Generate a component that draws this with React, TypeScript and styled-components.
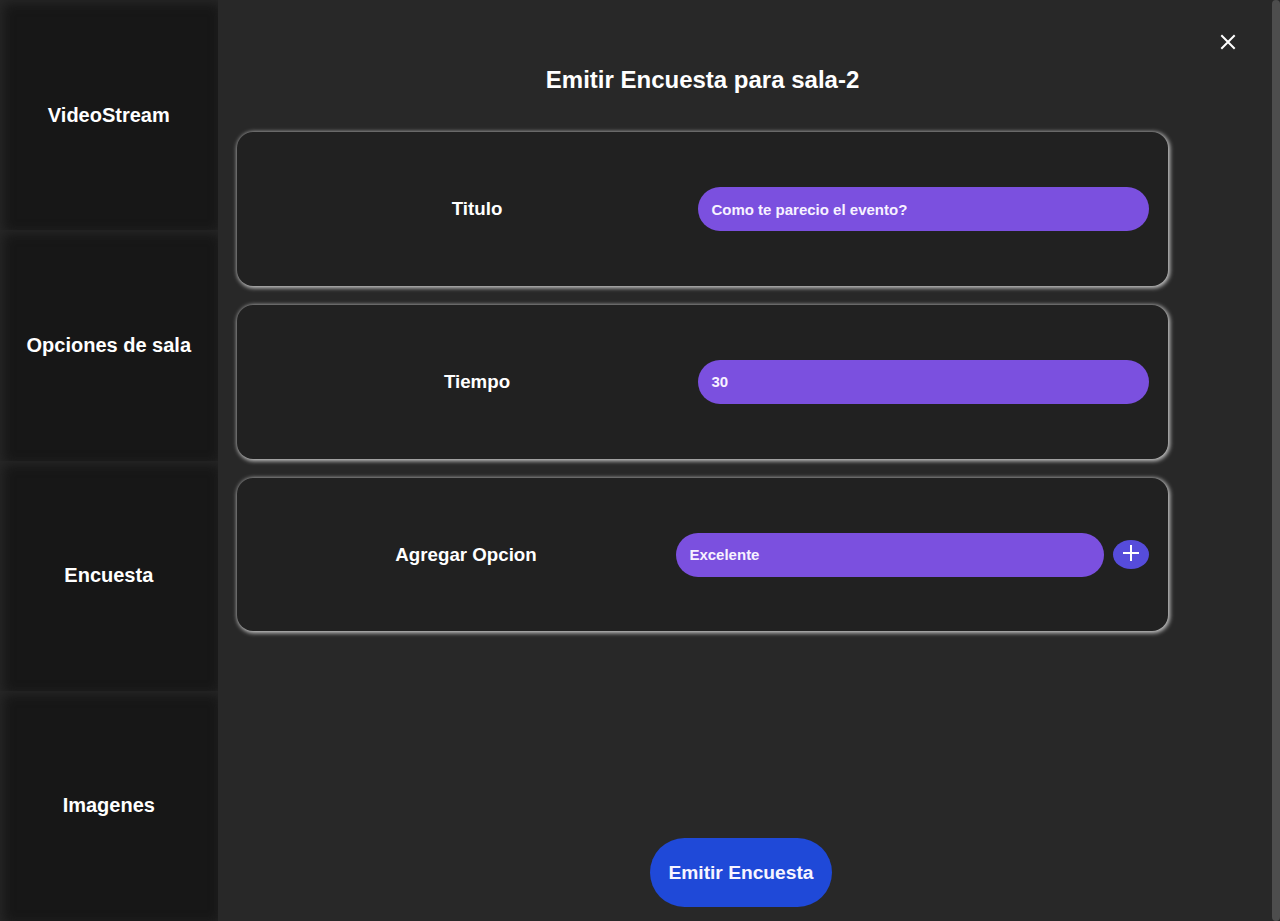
import React from "react";
import styled, { createGlobalStyle } from "styled-components";

const GlobalStyle = createGlobalStyle`
  *, *::before, *::after { box-sizing: border-box; }
  body {
    margin: 0;
    background: #282828;
    color: #fff;
    font-family: "Liberation Sans", Arial, sans-serif;
    overflow: hidden;
  }
  button, input { font: inherit; color: inherit; border: 0; outline: 0; }
`;

const Page = styled.div`
  display: grid;
  grid-template-columns: 217.6px 1fr 8px;
  height: 921px;
  background: #282828;
`;

const Sidebar = styled.nav`
  display: grid;
  grid-template-rows: repeat(4, 1fr);
`;

const NavItem = styled.button`
  display: flex;
  align-items: center;
  justify-content: center;
  padding: 0;
  background: #171717;
  box-shadow: inset 3px 3px 12px #282828;
  font-size: 20px;
  font-weight: 700;
  white-space: nowrap;
`;

const Main = styled.main`
  display: flex;
  flex-direction: column;
  padding: 34px 36px 14px 19.45px;
`;

const CloseButton = styled.button`
  align-self: flex-end;
  display: flex;
  width: 16px;
  height: 16px;
  padding: 0;
  background: transparent;
`;

const Title = styled.h1`
  width: 931px;
  margin: 16px 0 38.3px;
  font-size: 24px;
  line-height: 28px;
  text-align: center;
`;

const Form = styled.div`
  display: flex;
  flex-direction: column;
  gap: 19.2px;
  width: 931px;
`;

const Card = styled.section<{ $withAction?: boolean }>`
  display: grid;
  grid-template-columns: ${(p) => (p.$withAction ? "420px 473px" : "442px 451px")};
  align-items: center;
  height: 153.6px;
  padding: 0 19px;
  border-radius: 16px;
  background: #212121;
  box-shadow: 1px 1px 4px 1px #c8c8c8;
`;

const FieldRow = styled.div`
  display: flex;
  align-items: center;
  gap: 9px;
`;

const Label = styled.label`
  font-size: 18.72px;
  font-weight: 700;
  text-align: center;
`;

const Input = styled.input`
  flex: 1;
  min-width: 0;
  height: 44px;
  padding: 0 13.4px;
  border-radius: 22px;
  background: #7b50df;
  color: #f7f2ff;
  font-size: 15px;
  font-weight: 700;
`;

const AddButton = styled.button`
  display: flex;
  justify-content: center;
  width: 36px;
  height: 29px;
  padding: 5px 0 0;
  border-radius: 50%;
  background: #564cdb;
`;

const Submit = styled.button`
  width: 182px;
  height: 69px;
  margin: auto 0 0 412.95px;
  padding: 0;
  border-radius: 35px;
  background: #1f49d8;
  color: #f7f5ff;
  font-size: 19.2px;
  font-weight: 700;
`;

const ScrollTrack = styled.div`
  background: #282828;
`;

const ScrollThumb = styled.div`
  height: 100%;
  border-radius: 4px;
  background: #4d4d4d;
`;

const sections = ["VideoStream", "Opciones de sala", "Encuesta", "Imagenes"];

export default function App() {
  return (
    <>
      <GlobalStyle />
      <Page>
        <Sidebar>
          {sections.map((name) => (
            <NavItem key={name}>{name}</NavItem>
          ))}
        </Sidebar>
        <Main>
          <CloseButton aria-label="Cerrar">
            <svg width="16" height="16" viewBox="0 0 16 16" fill="none" stroke="#fff" strokeWidth="2">
              <path d="M1.3 1.3 14.7 14.7M14.7 1.3 1.3 14.7" />
            </svg>
          </CloseButton>
          <Title>Emitir Encuesta para sala-2</Title>
          <Form>
            <Card>
              <Label htmlFor="titulo">Titulo</Label>
              <FieldRow>
                <Input id="titulo" defaultValue="Como te parecio el evento?" />
              </FieldRow>
            </Card>
            <Card>
              <Label htmlFor="tiempo">Tiempo</Label>
              <FieldRow>
                <Input id="tiempo" defaultValue="30" />
              </FieldRow>
            </Card>
            <Card $withAction>
              <Label htmlFor="opcion">Agregar Opcion</Label>
              <FieldRow>
                <Input id="opcion" defaultValue="Excelente" />
                <AddButton aria-label="Agregar">
                  <svg width="16" height="16" viewBox="0 0 16 16" fill="none" stroke="#fff" strokeWidth="2">
                    <path d="M8 0v16M0 8h16" />
                  </svg>
                </AddButton>
              </FieldRow>
            </Card>
          </Form>
          <Submit>Emitir Encuesta</Submit>
        </Main>
        <ScrollTrack>
          <ScrollThumb />
        </ScrollTrack>
      </Page>
    </>
  );
}
